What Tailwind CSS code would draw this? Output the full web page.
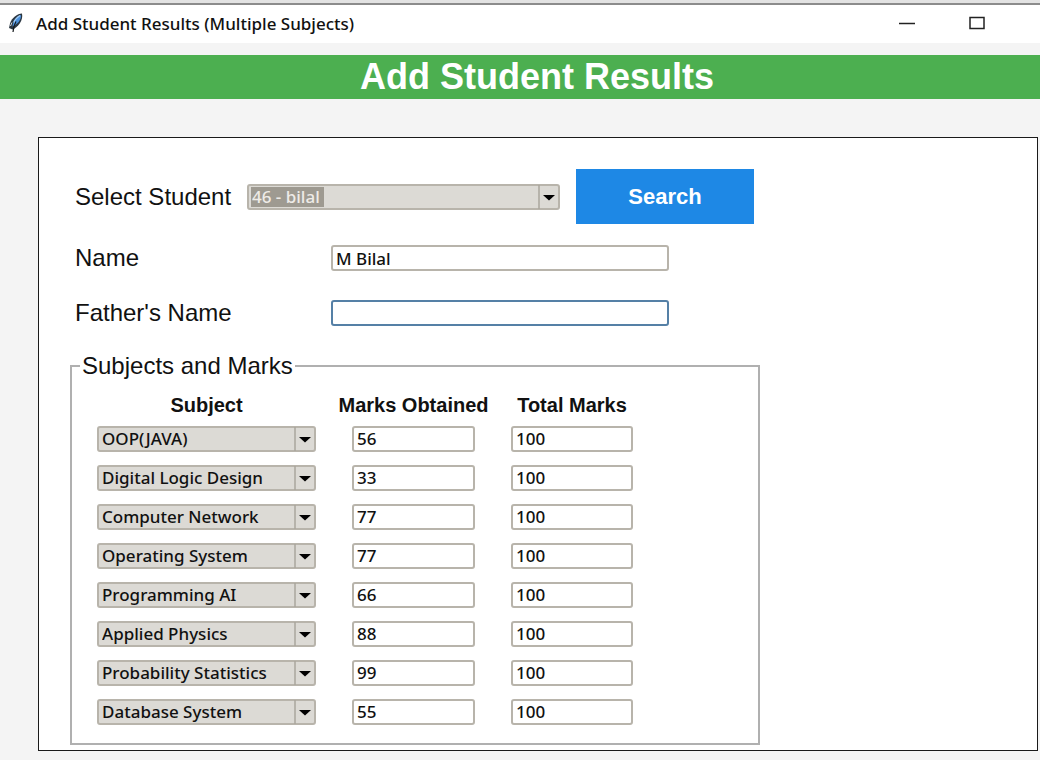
<!DOCTYPE html>
<html lang="en">
<head>
<meta charset="utf-8">
<meta name="viewport" content="width=device-width, initial-scale=1">
<title>Add Student Results (Multiple Subjects)</title>
<script src="https://cdn.jsdelivr.net/npm/@tailwindcss/browser@4"></script>
</head>
<body class="min-h-screen bg-[#f4f4f4] font-['Liberation_Sans',Arial,sans-serif] text-[#111]">
<div class="h-[3px] bg-[#e3e3e3]"></div>
<header class="flex h-10 items-center border-t-2 border-[#8c8c8c] bg-white pl-1">
  <svg class="h-6 w-6" viewBox="0 0 24 24" aria-hidden="true">
    <path d="M18 1.500C13.500 1.500 7.500 6 6 11.500L5 16L8.500 17.500C14 15.500 19.500 8 18 1.500Z" fill="#2b3742"/>
    <path d="M17 3C13 4.500 9 8.500 8.500 14.500C13 12.500 17.500 8 17 3Z" fill="#4a90dc"/>
    <path d="M16 3.500C13 5.500 10.500 8 9.800 10.500" stroke="#9fcaf5" stroke-width="1.500" fill="none"/>
    <path d="M6.500 14L8 10.500" stroke="#d8dde2" stroke-width="1" fill="none"/>
    <path d="M12 9.500C10.500 12 9.500 14.500 9 20" stroke="#15191d" stroke-width="1.200" fill="none"/>
  </svg>
  <h1 class="ml-2 font-['Noto_Sans',sans-serif] text-[17px] leading-6 font-medium">Add Student Results (Multiple Subjects)</h1>
  <div class="ml-auto flex pr-7">
    <button type="button" aria-label="Minimize" class="flex h-9 w-[70px] items-center justify-center"><svg class="h-4 w-4" viewBox="0 0 16 16"><path d="M0 7.500H16" stroke="#222" stroke-width="1.500"/></svg></button>
    <button type="button" aria-label="Maximize" class="flex h-9 w-[70px] items-center justify-center"><svg class="h-4 w-4" viewBox="0 0 16 16"><rect x="1" y="1.500" width="14" height="11" fill="none" stroke="#222" stroke-width="1.500"/></svg></button>
  </div>
</header>
<div class="mt-3 flex h-11 items-center justify-center bg-[#4caf50] pl-[34px]">
  <h2 class="text-[36px] leading-10 font-bold text-white">Add Student Results</h2>
</div>
<main class="mt-[38px] mr-[2px] ml-[38px] border border-[#1a1a1a] bg-white pt-[31px] pb-[5px]">
  <form>
    <div class="flex items-center pl-9 text-[24px] leading-7">
      <label for="student" class="w-[172px]">Select Student</label>
      <div class="relative w-[313px]">
        <select id="student" class="block h-[26px] w-full appearance-none rounded-[3px] border-2 border-[#b8b4ab] bg-[#dcdad5] bg-[linear-gradient(#9e9a91,#9e9a91)] bg-[size:73px_20px] bg-[position:2px_1px] bg-no-repeat pl-[3px] font-['Noto_Sans',sans-serif] text-[17px] leading-[22px] font-medium text-[#eeebe7]"><option>46 - bilal</option></select>
        <svg class="pointer-events-none absolute top-0 right-0 h-[26px] w-[22px]" viewBox="0 0 22 26" aria-hidden="true"><path d="M1 1V25" stroke="#aaa69d" stroke-width="1.500"/><path d="M5 11H17L11 16.500Z" fill="#000"/></svg>
      </div>
      <button type="button" class="ml-4 h-[55px] w-[178px] bg-[#1e88e5] text-[22px] font-bold text-white">Search</button>
    </div>
    <div class="mt-[21px] flex items-center pl-9 text-[24px] leading-[26px]">
      <label for="name" class="w-[256px]">Name</label>
      <input id="name" type="text" value="M Bilal" class="h-[26px] w-[338px] rounded-[3px] border-2 border-[#b8b4ab] bg-white px-[3px] font-['Noto_Sans',sans-serif] text-[17px] leading-[22px] font-medium">
    </div>
    <div class="mt-[29px] flex items-center pl-9 text-[24px] leading-[26px]">
      <label for="father" class="w-[256px]">Father's Name</label>
      <input id="father" type="text" value="" class="h-[26px] w-[338px] rounded-[3px] border-2 border-[#5580a6] bg-white px-[3px] font-['Noto_Sans',sans-serif] text-[17px] leading-[22px] font-medium">
    </div>
    <fieldset class="mt-[26px] ml-[31px] w-[690px] border-2 border-[#b0b0b0] pt-3 pb-3 pl-[25px]">
      <legend class="-ml-[17px] px-[2px] text-[24px] leading-7">Subjects and Marks</legend>
      <table class="table-fixed border-collapse font-['Noto_Sans',sans-serif] text-[17px] leading-[22px] font-medium">
        <thead class="font-['Liberation_Sans',Arial,sans-serif] text-[20px] leading-[27px] whitespace-nowrap">
          <tr><th scope="col" class="w-[239px] p-0 pr-5">Subject</th><th scope="col" class="w-[155px] p-0">Marks Obtained</th><th scope="col" class="w-[162px] p-0">Total Marks</th></tr>
        </thead>
        <tbody id="rows"></tbody>
      </table>
    </fieldset>
  </form>
</main>
<script>
const subjects = [['OOP(JAVA)',56],['Digital Logic Design',33],['Computer Network',77],['Operating System',77],['Programming AI',66],['Applied Physics',88],['Probability Statistics',99],['Database System',55]];
document.getElementById('rows').innerHTML = subjects.map(([name, mark]) => `
<tr class="h-[39px]">
  <td class="p-0 pr-5"><div class="relative w-[219px]">
    <select aria-label="Subject" class="block h-[26px] w-full appearance-none rounded-[3px] border-2 border-[#b8b4ab] bg-[#dcdad5] pl-[3px]"><option>${name}</option></select>
    <svg class="pointer-events-none absolute top-0 right-0 h-[26px] w-[22px]" viewBox="0 0 22 26" aria-hidden="true"><path d="M1 1V25" stroke="#aaa69d" stroke-width="1.500"/><path d="M5 11H17L11 16.500Z" fill="#000"/></svg>
  </div></td>
  <td class="p-0"><input type="text" aria-label="Marks obtained in ${name}" value="${mark}" class="mx-auto block h-[26px] w-[123px] rounded-[3px] border-2 border-[#b8b4ab] bg-white px-[3px]"></td>
  <td class="p-0"><input type="text" aria-label="Total marks for ${name}" value="100" class="mx-auto block h-[26px] w-[122px] rounded-[3px] border-2 border-[#b8b4ab] bg-white px-[3px]"></td>
</tr>`).join('');
</script>
</body>
</html>
